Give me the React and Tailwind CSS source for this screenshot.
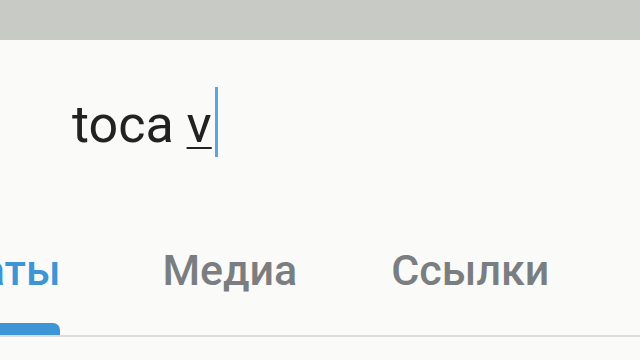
export default function App() {
  return (
    <div
      className="w-[640px] h-[360px] overflow-hidden bg-[#fafbf9] flex flex-col"
      style={{ fontFamily: "Roboto, 'Noto Sans', sans-serif" }}
    >
      <div className="h-[40px] bg-[#c8cac6] shrink-0" />
      <div className="mt-[47px] flex items-start pl-[72px] h-[76px]">
        <span className="text-[52px] leading-[76px] text-[#222222] whitespace-pre">
          toca{" "}
          <span className="underline decoration-2 underline-offset-[5px]">v</span>
        </span>
        <div className="w-[3px] h-[70px] bg-[#5aa6dd] ml-[3px]" />
      </div>
      <div className="mt-[82px] flex flex-col">
        <div className="flex items-end ml-[-56px] gap-[78px]">
          <div className="flex flex-col pl-[8px] pr-[16px]">
            <span className="text-[43px] leading-[50px] font-medium text-[#3d95d6]">Чаты</span>
            <div className="mt-[28px] h-[12px] rounded-t-[7px] bg-[#3d95d6]" />
          </div>
          <div className="flex flex-col px-[8px]">
            <span className="text-[43px] leading-[50px] font-medium text-[#7b7e80]">Медиа</span>
            <div className="mt-[28px] h-[12px]" />
          </div>
          <div className="flex flex-col px-[8px]">
            <span className="text-[43px] leading-[50px] font-medium text-[#7b7e80]">Ссылки</span>
            <div className="mt-[28px] h-[12px]" />
          </div>
        </div>
        <div className="h-[2px] bg-[#dcdddb]" />
      </div>
    </div>
  );
}
